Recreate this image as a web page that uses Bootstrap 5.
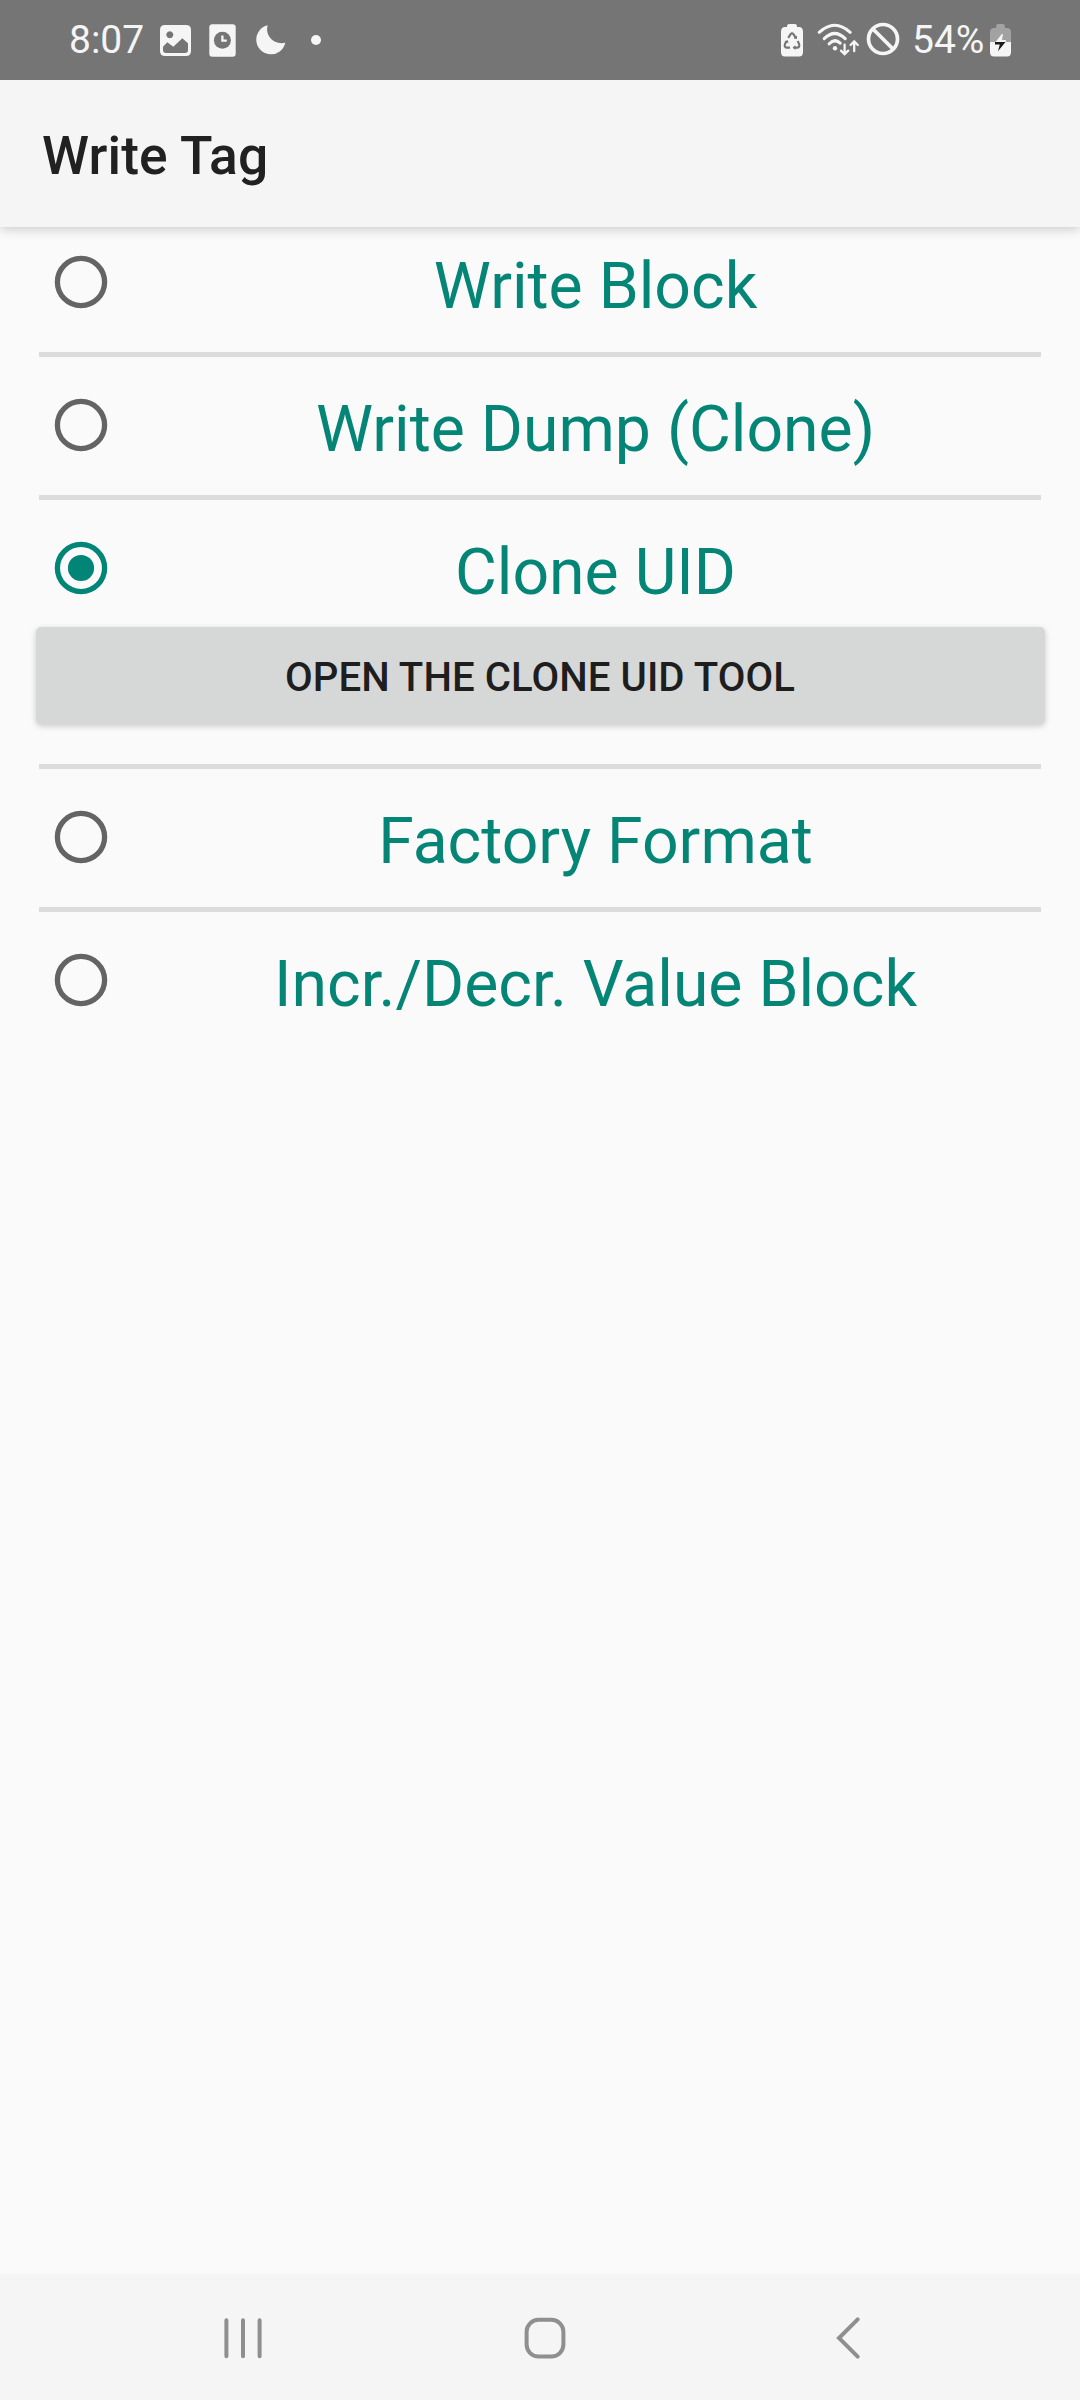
<!DOCTYPE html>
<html lang="en">
<head>
<meta charset="utf-8">
<meta name="viewport" content="width=device-width, initial-scale=1">
<title>Write Tag</title>
<link href="https://cdn.jsdelivr.net/npm/bootstrap@5.3.0/dist/css/bootstrap.min.css" rel="stylesheet">
<style>
  body { font-family: Roboto, "Liberation Sans", sans-serif; background: #fafafa; color: #212121; height: 2400px; overflow: hidden; }
  svg { display: block; flex: none; overflow: visible; }
  .status-bar { height: 80px; background: #757575; color: #f5f5f5; font-size: 39px; line-height: 46px; padding: 0 69px 0 69px; z-index: 2; }
  .status-bar span { white-space: nowrap; }
  .ic-image { margin-left: 16px; }
  .ic-clock { margin-left: 18px; }
  .ic-moon { margin-left: 20px; }
  .ic-dot { margin-left: 25px; }
  .clock-text { width: 75px; }
  .ic-wifi { margin-left: 15px; }
  .ic-none { margin: -3px 0 0 6px; }
  .battery-text { margin-left: 12px; width: 73px; }
  .ic-charge { margin-left: 5px; }
  .app-bar { height: 147px; background: #f5f5f5; padding: 0 42px; box-shadow: 0 2px 11px rgba(0,0,0,.2); z-index: 1; }
  .app-title { font-size: 53.4px; font-weight: 500; line-height: 62px; margin: 4px 0 0; letter-spacing: .1px; }
  .options { padding: 0 39px; }
  .option { padding: 26px 0 28px; border-bottom: 5px solid #dcdcdc; }
  .option:first-child { padding-top: 13px; }
  .option:last-child { border-bottom: 0; }
  .option-label { height: 84px; margin: 0; }
  .option-radio { width: 54px; height: 54px; margin: 0 42px 0 15px; color: #646464; }
  .option-text { font-size: 64.3px; line-height: 74px; color: #048576; padding-top: 8px; }
  .selected { padding-bottom: 40px; }
  .selected .option-radio { color: #008577; }
  .btn-tool { --bs-btn-bg: #d6d8d7; --bs-btn-color: #1e1e1e; --bs-btn-border-width: 0; height: 97px; margin: 17px -3.5px 0; width: 1009px; border-radius: 5px; font-size: 40.2px; line-height: 46px; letter-spacing: .05px; font-weight: 500; padding: 5px 0 0; box-shadow: 0 2px 6px rgba(0,0,0,.2); }
  .nav-bar { height: 126px; background: #f5f5f5; padding-left: 224px; }
  .nav-home { margin-left: 262px; }
  .nav-back { margin-left: 270px; }
</style>
</head>
<body class="d-flex flex-column">
  <svg width="0" height="0" class="position-absolute">
    <symbol id="radio-off" viewBox="0 0 54 54"><circle cx="27" cy="27" r="23.6" fill="none" stroke="currentColor" stroke-width="5.3"/></symbol>
    <symbol id="radio-on" viewBox="0 0 54 54"><circle cx="27" cy="27" r="23.6" fill="none" stroke="currentColor" stroke-width="5.3"/><circle cx="27" cy="27" r="13.1" fill="currentColor"/></symbol>
  </svg>

  <div class="status-bar position-relative d-flex align-items-center justify-content-between flex-shrink-0">
    <div class="d-flex align-items-center">
      <span class="clock-text">8:07</span>
      <svg class="ic-image" width="31" height="31" viewBox="0 0 31 31" fill="#f5f5f5"><path fill-rule="evenodd" d="M5 0H26Q31 0 31 5V26Q31 31 26 31H5Q0 31 0 26V5Q0 0 5 0ZM9.8 6.3a3.5 3.5 0 1 0 .01 0ZM3 21.7 7.3 17.3 13.3 21.7 22.3 13.2 28 18.3V25Q28 28 25 28H6Q3 28 3 25Z"/></svg>
      <svg class="ic-clock" width="27" height="33" viewBox="0 0 27 33"><rect x=".3" y=".3" width="26.4" height="32.4" rx="3" fill="#f5f5f5"/><circle cx="13.4" cy="16.3" r="8.5" fill="#757575"/><path d="M13.4 11.5V16.6H17.8" fill="none" stroke="#f5f5f5" stroke-width="2.3"/></svg>
      <svg class="ic-moon" width="30" height="30" viewBox="0 0 30 30"><path d="M11.7 .3A14.7 14.7 0 1 0 29.3 17.8C18.5 20.3 8.5 11 11.7 .3Z" fill="#f5f5f5"/></svg>
      <svg class="ic-dot" width="10" height="10" viewBox="0 0 10 10"><circle cx="5" cy="5" r="5" fill="#f5f5f5"/></svg>
    </div>
    <div class="d-flex align-items-center">
      <svg width="22" height="33" viewBox="0 0 22 33"><path d="M8 0H14Q16 0 16 3H18Q22 3 22 8V28Q22 32.5 18 32.5H4Q0 32.5 0 28V8Q0 3 4 3H6Q6 0 8 0Z" fill="#f5f5f5"/><path d="M7.2 13.8 9.6 10.2Q11 8.5 12.4 10.2L14.8 13.8M16.6 17 18.1 20Q19 23.3 16.4 23.6H12.8M9 23.6H5.6Q3 23.3 4 20L5.6 17" fill="none" stroke="#757575" stroke-width="2.1"/><path d="M3.6 17.4 6.8 16 7.4 19.2ZM12.6 14.4 16 15 16 11.6ZM14.4 21.2 11.6 23.6 14.4 26Z" fill="#757575"/></svg>
      <svg class="ic-wifi" width="42" height="34" viewBox="0 0 42 34" fill="none" stroke="#f5f5f5" stroke-linecap="round"><path d="M1.2 9.3Q16.7-4.8 32.2 9.3M6.2 15.6Q16.7 5.4 27.2 15.6" stroke-width="3.1"/><path d="M11.2 20.8Q16.7 15 22.2 20.2" stroke-width="3.1"/><circle cx="17" cy="25.2" r="2.2" fill="#f5f5f5" stroke="none"/><path d="M26.6 21.6V31M23 27.6 26.6 31.2 30.2 27.6M36.2 28.2V18.6M32.6 22 36.2 18.4 39.8 22" stroke-width="2.3"/></svg>
      <svg class="ic-none" width="34" height="34" viewBox="0 0 34 34" fill="none" stroke="#f5f5f5" stroke-width="3.7"><circle cx="17" cy="17" r="14.5"/><path d="M6.7 6.7 27.3 27.3"/></svg>
      <span class="battery-text">54%</span>
      <svg class="ic-charge" width="21" height="33" viewBox="0 0 21 33"><path d="M8 0H13Q15 0 15 4H17Q21 4 21 8V18H0V8Q0 4 4 4H6Q6 0 8 0Z" fill="#a2a2a2"/><path d="M0 18H21V28Q21 32.5 17 32.5H4Q0 32.5 0 28Z" fill="#f5f5f5"/><path d="M11.8 10 5.5 18H15.8L15.8 16H12L13 10Z" fill="#f5f5f5"/><path d="M5 18H15.5L8 27.3 9.8 20.4H5Z" fill="#1c1c1c"/></svg>
    </div>
  </div>

  <header class="app-bar d-flex align-items-center flex-shrink-0 position-relative">
    <h1 class="app-title">Write Tag</h1>
  </header>

  <main class="options flex-grow-1">
    <div class="option">
      <label class="option-label d-flex align-items-center">
        <svg class="option-radio"><use href="#radio-off"/></svg>
        <span class="option-text flex-grow-1 text-center">Write Block</span>
      </label>
    </div>
    <div class="option">
      <label class="option-label d-flex align-items-center">
        <svg class="option-radio"><use href="#radio-off"/></svg>
        <span class="option-text flex-grow-1 text-center">Write Dump (Clone)</span>
      </label>
    </div>
    <div class="option selected">
      <label class="option-label d-flex align-items-center">
        <svg class="option-radio"><use href="#radio-on"/></svg>
        <span class="option-text flex-grow-1 text-center">Clone UID</span>
      </label>
      <button type="button" class="btn btn-tool text-uppercase d-block">Open the Clone UID Tool</button>
    </div>
    <div class="option">
      <label class="option-label d-flex align-items-center">
        <svg class="option-radio"><use href="#radio-off"/></svg>
        <span class="option-text flex-grow-1 text-center">Factory Format</span>
      </label>
    </div>
    <div class="option">
      <label class="option-label d-flex align-items-center">
        <svg class="option-radio"><use href="#radio-off"/></svg>
        <span class="option-text flex-grow-1 text-center">Incr./Decr. Value Block</span>
      </label>
    </div>
  </main>

  <nav class="nav-bar d-flex align-items-center flex-shrink-0">
    <svg width="38" height="42" viewBox="0 0 38 42" stroke="#8f8f8f" stroke-width="4" stroke-linecap="round"><path d="M2.4 4.3V40.3M19 4.3V40.3M35.6 4.3V40.3"/></svg>
    <svg class="nav-home" width="42" height="42" viewBox="0 0 42 42"><rect x="2.6" y="3.8" width="36.8" height="36.8" rx="12" fill="none" stroke="#8f8f8f" stroke-width="4"/></svg>
    <svg class="nav-back" width="24" height="42" viewBox="0 0 24 42"><path d="M21.7 3.3 3 22 21.7 40.7" fill="none" stroke="#8f8f8f" stroke-width="4" stroke-linecap="round"/></svg>
  </nav>
<script src="https://cdn.jsdelivr.net/npm/bootstrap@5.3.0/dist/js/bootstrap.bundle.min.js"></script>
</body>
</html>
